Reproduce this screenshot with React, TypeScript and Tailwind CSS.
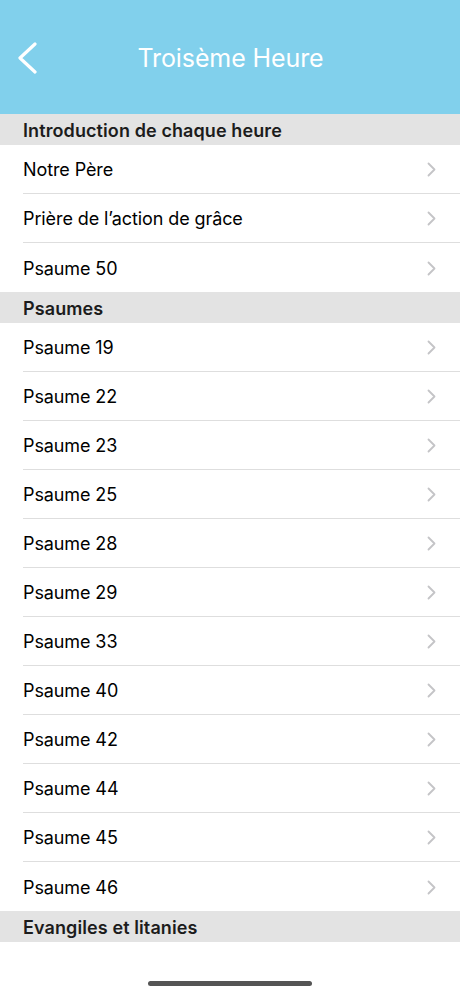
const sections = [
  {
    title: "Introduction de chaque heure",
    items: ["Notre Père", "Prière de l’action de grâce", "Psaume 50"],
  },
  {
    title: "Psaumes",
    items: [
      "Psaume 19",
      "Psaume 22",
      "Psaume 23",
      "Psaume 25",
      "Psaume 28",
      "Psaume 29",
      "Psaume 33",
      "Psaume 40",
      "Psaume 42",
      "Psaume 44",
      "Psaume 45",
      "Psaume 46",
    ],
  },
  { title: "Evangiles et litanies", items: [] as string[] },
];

function Chevron() {
  return (
    <svg width="9" height="15" viewBox="0 0 9 15" fill="none" className="shrink-0">
      <path d="M1.5 1.5L7.5 7.5L1.5 13.5" stroke="#c4c4c7" strokeWidth="1.8" strokeLinecap="round" strokeLinejoin="round" />
    </svg>
  );
}

export default function App() {
  return (
    <div className="relative w-[460px] h-[996px] overflow-hidden bg-white font-['Inter','Liberation_Sans',sans-serif]">
      <header className="h-[114px] bg-[#81d0ec] flex items-center pt-[2px] relative">
        <svg width="22" height="32" viewBox="0 0 22 32" fill="none" className="absolute left-[16px] top-[42px]">
          <path d="M19 2L4 16L19 30" stroke="white" strokeWidth="3.2" strokeLinecap="round" strokeLinejoin="round" />
        </svg>
        <h1 className="w-full text-center text-white text-[25px] leading-none tracking-[-0.1px] mt-[1px] pl-[1px]">Troisème Heure</h1>
      </header>
      <main>
        {sections.map((s) => (
          <section key={s.title}>
            <div className="h-[31px] bg-[#e3e3e3] flex items-center pt-[2px] px-[23px] text-[18px] font-semibold text-[#1c1c1c] tracking-[0.1px]">
              {s.title}
            </div>
            {s.items.map((item, i) => (
              <div key={item} className="h-[49px] pl-[23px] flex">
                <div className={`flex-1 flex items-center justify-between pt-[1px] pr-[24px] ${i < s.items.length - 1 ? "border-b border-[#dedede]" : ""}`}>
                  <span className="text-[18px] text-black tracking-[-0.1px]">{item}</span>
                  <Chevron />
                </div>
              </div>
            ))}
          </section>
        ))}
      </main>
      <div className="absolute left-[148px] top-[981px] w-[164px] h-[5px] rounded-full bg-[#555]" />
    </div>
  );
}
